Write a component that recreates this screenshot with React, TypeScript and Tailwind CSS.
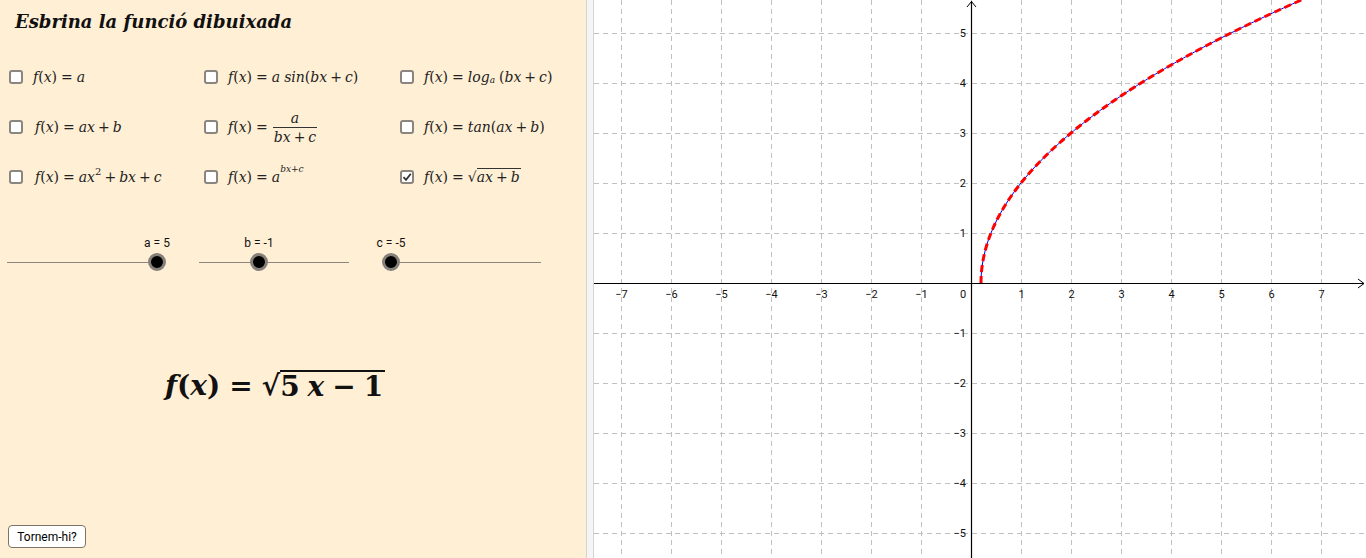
import React from "react";

const OX = 377;
const OY = 283;
const U = 50;
const GW = 772;
const GH = 558;

function I({ children }: { children: React.ReactNode }) {
  return <span className="italic">{children}</span>;
}
function Rel() {
  return <span className="mx-[4px] not-italic">=</span>;
}
function Plus() {
  return <span className="mx-[3px] not-italic">+</span>;
}
function Fx() {
  return (
    <>
      <I>f</I>(<I>x</I>)
      <Rel />
    </>
  );
}

function Checkbox({ checked = false }: { checked?: boolean }) {
  return (
    <div className="w-[14px] h-[14px] rounded-[3px] border-2 border-[#8a857e] bg-white flex items-center justify-center shrink-0">
      {checked && (
        <svg width="10" height="10" viewBox="0 0 10 10">
          <path d="M1.5 5.2 L4 7.8 L8.8 1.8" fill="none" stroke="#333" strokeWidth="1.8" />
        </svg>
      )}
    </div>
  );
}

function Option({ checked, children }: { checked?: boolean; children: React.ReactNode }) {
  return (
    <div className="h-[50px] flex items-center">
      <Checkbox checked={checked} />
      <div className="ml-[10px] font-['DejaVu_Serif',serif] text-[14px] text-[#222] whitespace-nowrap flex items-center">
        {children}
      </div>
    </div>
  );
}

function Slider({ label, frac }: { label: string; frac: number }) {
  const left = frac * 150;
  return (
    <div className="relative w-[150px] h-[36px]">
      <div
        className="absolute top-0 -translate-x-1/2 font-['Roboto',sans-serif] text-[12px] leading-[14px] text-[#111] whitespace-nowrap"
        style={{ left }}
      >
        {label}
      </div>
      <div className="absolute top-[26px] left-0 w-full h-px bg-[#8a857e]" />
      <div
        className="absolute top-[17px] w-[18px] h-[18px] -ml-[9px] rounded-full bg-black border-[3px] border-[#85807a]"
        style={{ left }}
      />
    </div>
  );
}

function Graph() {
  const vLines = [];
  for (let k = -7; k <= 7; k++) vLines.push(OX + k * U);
  const hLines = [];
  for (let k = -5; k <= 5; k++) hLines.push(OY - k * U);

  const pts: string[] = [];
  for (let y = 0; y <= 5.9; y += 0.02) {
    const x = (y * y + 1) / 5;
    pts.push(`${(OX + x * U).toFixed(2)},${(OY - y * U).toFixed(2)}`);
  }
  const d = "M" + pts.join(" L");

  const xLabels = [-7, -6, -5, -4, -3, -2, -1, 1, 2, 3, 4, 5, 6, 7];
  const yLabels = [5, 4, 3, 2, 1, -1, -2, -3, -4, -5];
  const fmt = (n: number) => (n < 0 ? "\u2212" + Math.abs(n) : String(n));

  return (
    <svg width={GW} height={GH} className="block bg-white" style={{ fontFamily: "Roboto, sans-serif" }}>
      {vLines.map((x) => (
        <line key={"v" + x} x1={x + 0.5} y1={0} x2={x + 0.5} y2={GH} stroke="#c0c0c0" strokeWidth="1" strokeDasharray="5 4" />
      ))}
      {hLines.map((y) => (
        <line key={"h" + y} x1={0} y1={y + 0.5} x2={GW} y2={y + 0.5} stroke="#c0c0c0" strokeWidth="1" strokeDasharray="5 4" />
      ))}
      <line x1={0} y1={OY + 0.5} x2={GW - 2} y2={OY + 0.5} stroke="#000" strokeWidth="1.2" />
      <path d={`M${GW - 8} ${OY - 4} L${GW - 2} ${OY + 0.5} L${GW - 8} ${OY + 5}`} fill="none" stroke="#000" strokeWidth="1" />
      <line x1={OX + 0.5} y1={1} x2={OX + 0.5} y2={GH} stroke="#000" strokeWidth="1.2" />
      <path d={`M${OX - 4} 7 L${OX + 0.5} 1.5 L${OX + 5} 7`} fill="none" stroke="#000" strokeWidth="1" />
      {xLabels.map((n) => (
        <text key={"xl" + n} x={OX + n * U + 0.5} y={OY + 15} fontSize="11" textAnchor="middle" fill="#111">
          {fmt(n)}
        </text>
      ))}
      <text x={OX - 8} y={OY + 15} fontSize="11" textAnchor="middle" fill="#111">
        0
      </text>
      {yLabels.map((n) => (
        <text key={"yl" + n} x={OX - 5} y={OY - n * U + 4} fontSize="11" textAnchor="end" fill="#111">
          {fmt(n)}
        </text>
      ))}
      <path d={d} fill="none" stroke="#0000ff" strokeWidth="1" />
      <path d={d} fill="none" stroke="#ff0000" strokeWidth="3" strokeDasharray="7 4" />
    </svg>
  );
}

export default function App() {
  return (
    <div className="flex w-[1366px] h-[558px] overflow-hidden">
      <div className="w-[586px] h-[558px] bg-[#FFEFD5] flex flex-col shrink-0">
        <div className="pt-[12px] pl-[15px] h-[32px] leading-[20px] font-['DejaVu_Serif',serif] italic font-bold text-[18px] text-[#111]">
          Esbrina la funció dibuixada
        </div>
        <div className="mt-[20px] pl-[9px] grid grid-cols-[195px_196px_186px]">
          <Option>
            <Fx />
            <I>a</I>
          </Option>
          <Option>
            <Fx />
            <I>a</I>
            <span className="ml-[4px]">
              <I>sin</I>(<I>bx</I>
              <Plus />
              <I>c</I>)
            </span>
          </Option>
          <Option>
            <Fx />
            <I>log</I>
            <span className="italic text-[9px] relative top-[4px]">a</span>
            <span className="ml-[4px]">
              (<I>bx</I>
              <Plus />
              <I>c</I>)
            </span>
          </Option>

          <Option>
            <span className="ml-[2px]" />
            <Fx />
            <I>ax</I>
            <Plus />
            <I>b</I>
          </Option>
          <Option>
            <Fx />
            <span className="inline-flex flex-col items-center ml-[1px]">
              <span className="italic leading-[18px]">a</span>
              <span className="border-t border-[#333] leading-[18px] px-[1px]">
                <I>bx</I>
                <Plus />
                <I>c</I>
              </span>
            </span>
          </Option>
          <Option>
            <Fx />
            <I>tan</I>(<I>ax</I>
            <Plus />
            <I>b</I>)
          </Option>

          <Option>
            <span className="ml-[2px]" />
            <Fx />
            <I>ax</I>
            <span className="text-[10px] relative -top-[6px]">2</span>
            <Plus />
            <I>bx</I>
            <Plus />
            <I>c</I>
          </Option>
          <Option>
            <Fx />
            <I>a</I>
            <span className="italic text-[9px] relative -top-[7px]">bx+c</span>
          </Option>
          <Option checked>
            <Fx />
            <span>√</span>
            <span className="border-t border-[#333] leading-[17px] pr-[1px]">
              <I>ax</I>
              <Plus />
              <I>b</I>
            </span>
          </Option>
        </div>

        <div className="mt-[34px] pl-[7px] flex gap-[42px]">
          <Slider label="a = 5" frac={1} />
          <Slider label="b = -1" frac={0.4} />
          <Slider label="c = -5" frac={0} />
        </div>

        <div className="mt-[97px] pl-[165px] h-[34px] flex items-center font-['DejaVu_Serif',serif] font-bold text-[28px] text-[#111] whitespace-nowrap">
          <I>f</I>(<I>x</I>)<span className="mx-[9px]">=</span>
          <span>√</span>
          <span className="border-t-2 border-[#111] leading-[30px] pr-[2px]">
            5<span className="ml-[8px] italic">x</span>
            <span className="mx-[8px]">−</span>1
          </span>
        </div>

        <div className="mt-auto mb-[10px] ml-[8px]">
          <button className="w-[78px] h-[23px] bg-white border-[1.5px] border-[#7d7468] rounded-[4px] font-['Roboto',sans-serif] text-[12px] text-black">
            Tornem-hi?
          </button>
        </div>
      </div>
      <div className="w-[8px] h-[558px] bg-[#f5f5f5] border-x border-[#d4d4d4] shrink-0" />
      <Graph />
    </div>
  );
}
